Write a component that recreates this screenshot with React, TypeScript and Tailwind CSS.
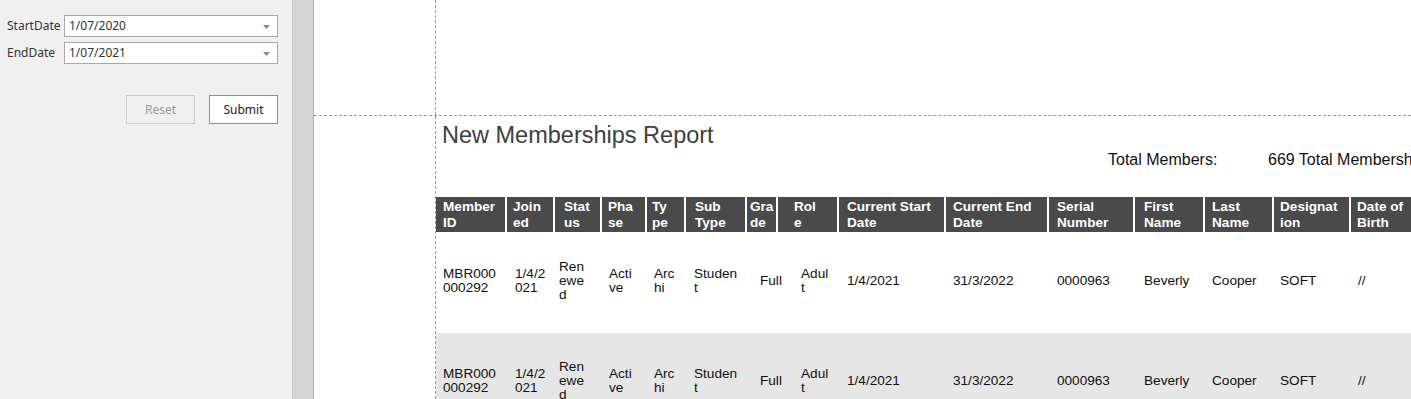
import React from "react";

type Col = {
  w: string;
  hp: string;
  bp: string;
  head: string[];
  body: string[];
};

const cols: Col[] = [
  { w: "w-[69px]", hp: "pl-[7px]", bp: "pl-[7px]", head: ["Member", "ID"], body: ["MBR000", "000292"] },
  { w: "w-[46px]", hp: "pl-[6px]", bp: "pl-[8px]", head: ["Join", "ed"], body: ["1/4/2", "021"] },
  { w: "w-[45px]", hp: "pl-[9px]", bp: "pl-[4px]", head: ["Stat", "us"], body: ["Ren", "ewe", "d"] },
  { w: "w-[43px]", hp: "pl-[6px]", bp: "pl-[7px]", head: ["Pha", "se"], body: ["Acti", "ve"] },
  { w: "w-[37px]", hp: "pl-[5px]", bp: "pl-[7px]", head: ["Ty", "pe"], body: ["Arc", "hi"] },
  { w: "w-[59px]", hp: "pl-[9px]", bp: "pl-[8px]", head: ["Sub", "Type"], body: ["Studen", "t"] },
  { w: "w-[29px]", hp: "pl-[3px]", bp: "pl-[13px]", head: ["Gra", "de"], body: ["Full"] },
  { w: "w-[59px]", hp: "pl-[16px]", bp: "pl-[23px]", head: ["Rol", "e"], body: ["Adul", "t"] },
  { w: "w-[105px]", hp: "pl-[8px]", bp: "pl-[8px]", head: ["Current Start", "Date"], body: ["1/4/2021"] },
  { w: "w-[101px]", hp: "pl-[7px]", bp: "pl-[7px]", head: ["Current End", "Date"], body: ["31/3/2022"] },
  { w: "w-[84px]", hp: "pl-[8px]", bp: "pl-[8px]", head: ["Serial", "Number"], body: ["0000963"] },
  { w: "w-[68px]", hp: "pl-[9px]", bp: "pl-[9px]", head: ["First", "Name"], body: ["Beverly"] },
  { w: "w-[67px]", hp: "pl-[7px]", bp: "pl-[7px]", head: ["Last", "Name"], body: ["Cooper"] },
  { w: "w-[75px]", hp: "pl-[6px]", bp: "pl-[6px]", head: ["Designat", "ion"], body: ["SOFT"] },
  { w: "w-[70px]", hp: "pl-[6px]", bp: "pl-[7px]", head: ["Date of", "Birth"], body: ["//"] },
];

function DateInput({ value }: { value: string }) {
  return (
    <div className="flex h-[22px] flex-1 items-center justify-between border border-[#a9a9a9] bg-white pl-[4px] pr-[7px]">
      <span className="leading-none">{value}</span>
      <svg width="7" height="4" viewBox="0 0 7 4" className="mt-[1px]">
        <path d="M0 0 H7 L3.5 4 Z" fill="#8a8a8a" />
      </svg>
    </div>
  );
}

function BodyRow({ grey }: { grey: boolean }) {
  return (
    <div className={grey ? "flex h-[100px] shrink-0 gap-[2px] bg-[#e6e6e6]" : "flex h-[100px] shrink-0 gap-[2px] bg-white"}>
      {cols.map((c, i) => (
        <div key={i} className={`${c.w} ${c.bp} flex shrink-0 flex-col justify-center pb-[4px]`}>
          {c.body.map((l, j) => (
            <span key={j} className="block whitespace-nowrap leading-[14px]">
              {l}
            </span>
          ))}
        </div>
      ))}
    </div>
  );
}

export default function App() {
  return (
    <div className="flex h-[399px] w-[1411px] overflow-hidden bg-white">
      <aside className="w-[292px] shrink-0 bg-[#f0f0f0] pl-[7px] pr-[14px] pt-[15px] font-['Noto_Sans',sans-serif] text-[12px] text-[#333]">
        <div className="flex flex-col gap-[5px]">
          <div className="flex items-center">
            <span className="w-[57px] shrink-0">StartDate</span>
            <DateInput value="1/07/2020" />
          </div>
          <div className="flex items-center">
            <span className="w-[57px] shrink-0">EndDate</span>
            <DateInput value="1/07/2021" />
          </div>
        </div>
        <div className="mt-[31px] flex justify-end gap-[14px]">
          <button className="h-[29px] w-[69px] border border-[#cccccc] text-[#999]">Reset</button>
          <button className="h-[29px] w-[69px] border border-[#8f8f8f] bg-white text-[#222]">Submit</button>
        </div>
      </aside>
      <div className="w-[22px] shrink-0 border-l border-r border-l-[#c9c9c9] border-r-[#b3b3b3] bg-[#d4d4d4]" />
      <main className="flex min-w-0 flex-1 flex-col font-['Liberation_Sans',Arial,sans-serif]">
        <div className="flex h-[116px] shrink-0 border-b border-dashed border-[#9a9a9a]">
          <div className="w-[122px] shrink-0 border-r border-dashed border-[#9a9a9a]" />
        </div>
        <div className="flex min-h-0 flex-1">
          <div className="w-[122px] shrink-0 border-r border-dashed border-[#9a9a9a]" />
          <div className="flex min-w-0 flex-1 flex-col overflow-hidden">
            <h1 className="mt-[6px] pl-[6px] text-[23.5px] leading-[27px] text-[#404040]">New Memberships Report</h1>
            <div className="mt-[2px] flex whitespace-nowrap pl-[672px] text-[16px] leading-[18px] text-[#111]">
              <span className="w-[160px] shrink-0">Total Members:</span>
              <span>669 Total Memberships:</span>
            </div>
            <div className="mt-[28px] flex h-[35px] shrink-0 gap-[2px] text-[13.6px] font-bold text-white">
              {cols.map((c, i) => (
                <div key={i} className={`${c.w} ${c.hp} shrink-0 bg-[#4a4a4a] pt-[2px]`}>
                  {c.head.map((l, j) => (
                    <span key={j} className="block whitespace-nowrap leading-[16px]">
                      {l}
                    </span>
                  ))}
                </div>
              ))}
            </div>
            <div className="mt-[1px] flex flex-col text-[13.6px] text-[#111]">
              <BodyRow grey={false} />
              <BodyRow grey={true} />
            </div>
          </div>
        </div>
      </main>
    </div>
  );
}
